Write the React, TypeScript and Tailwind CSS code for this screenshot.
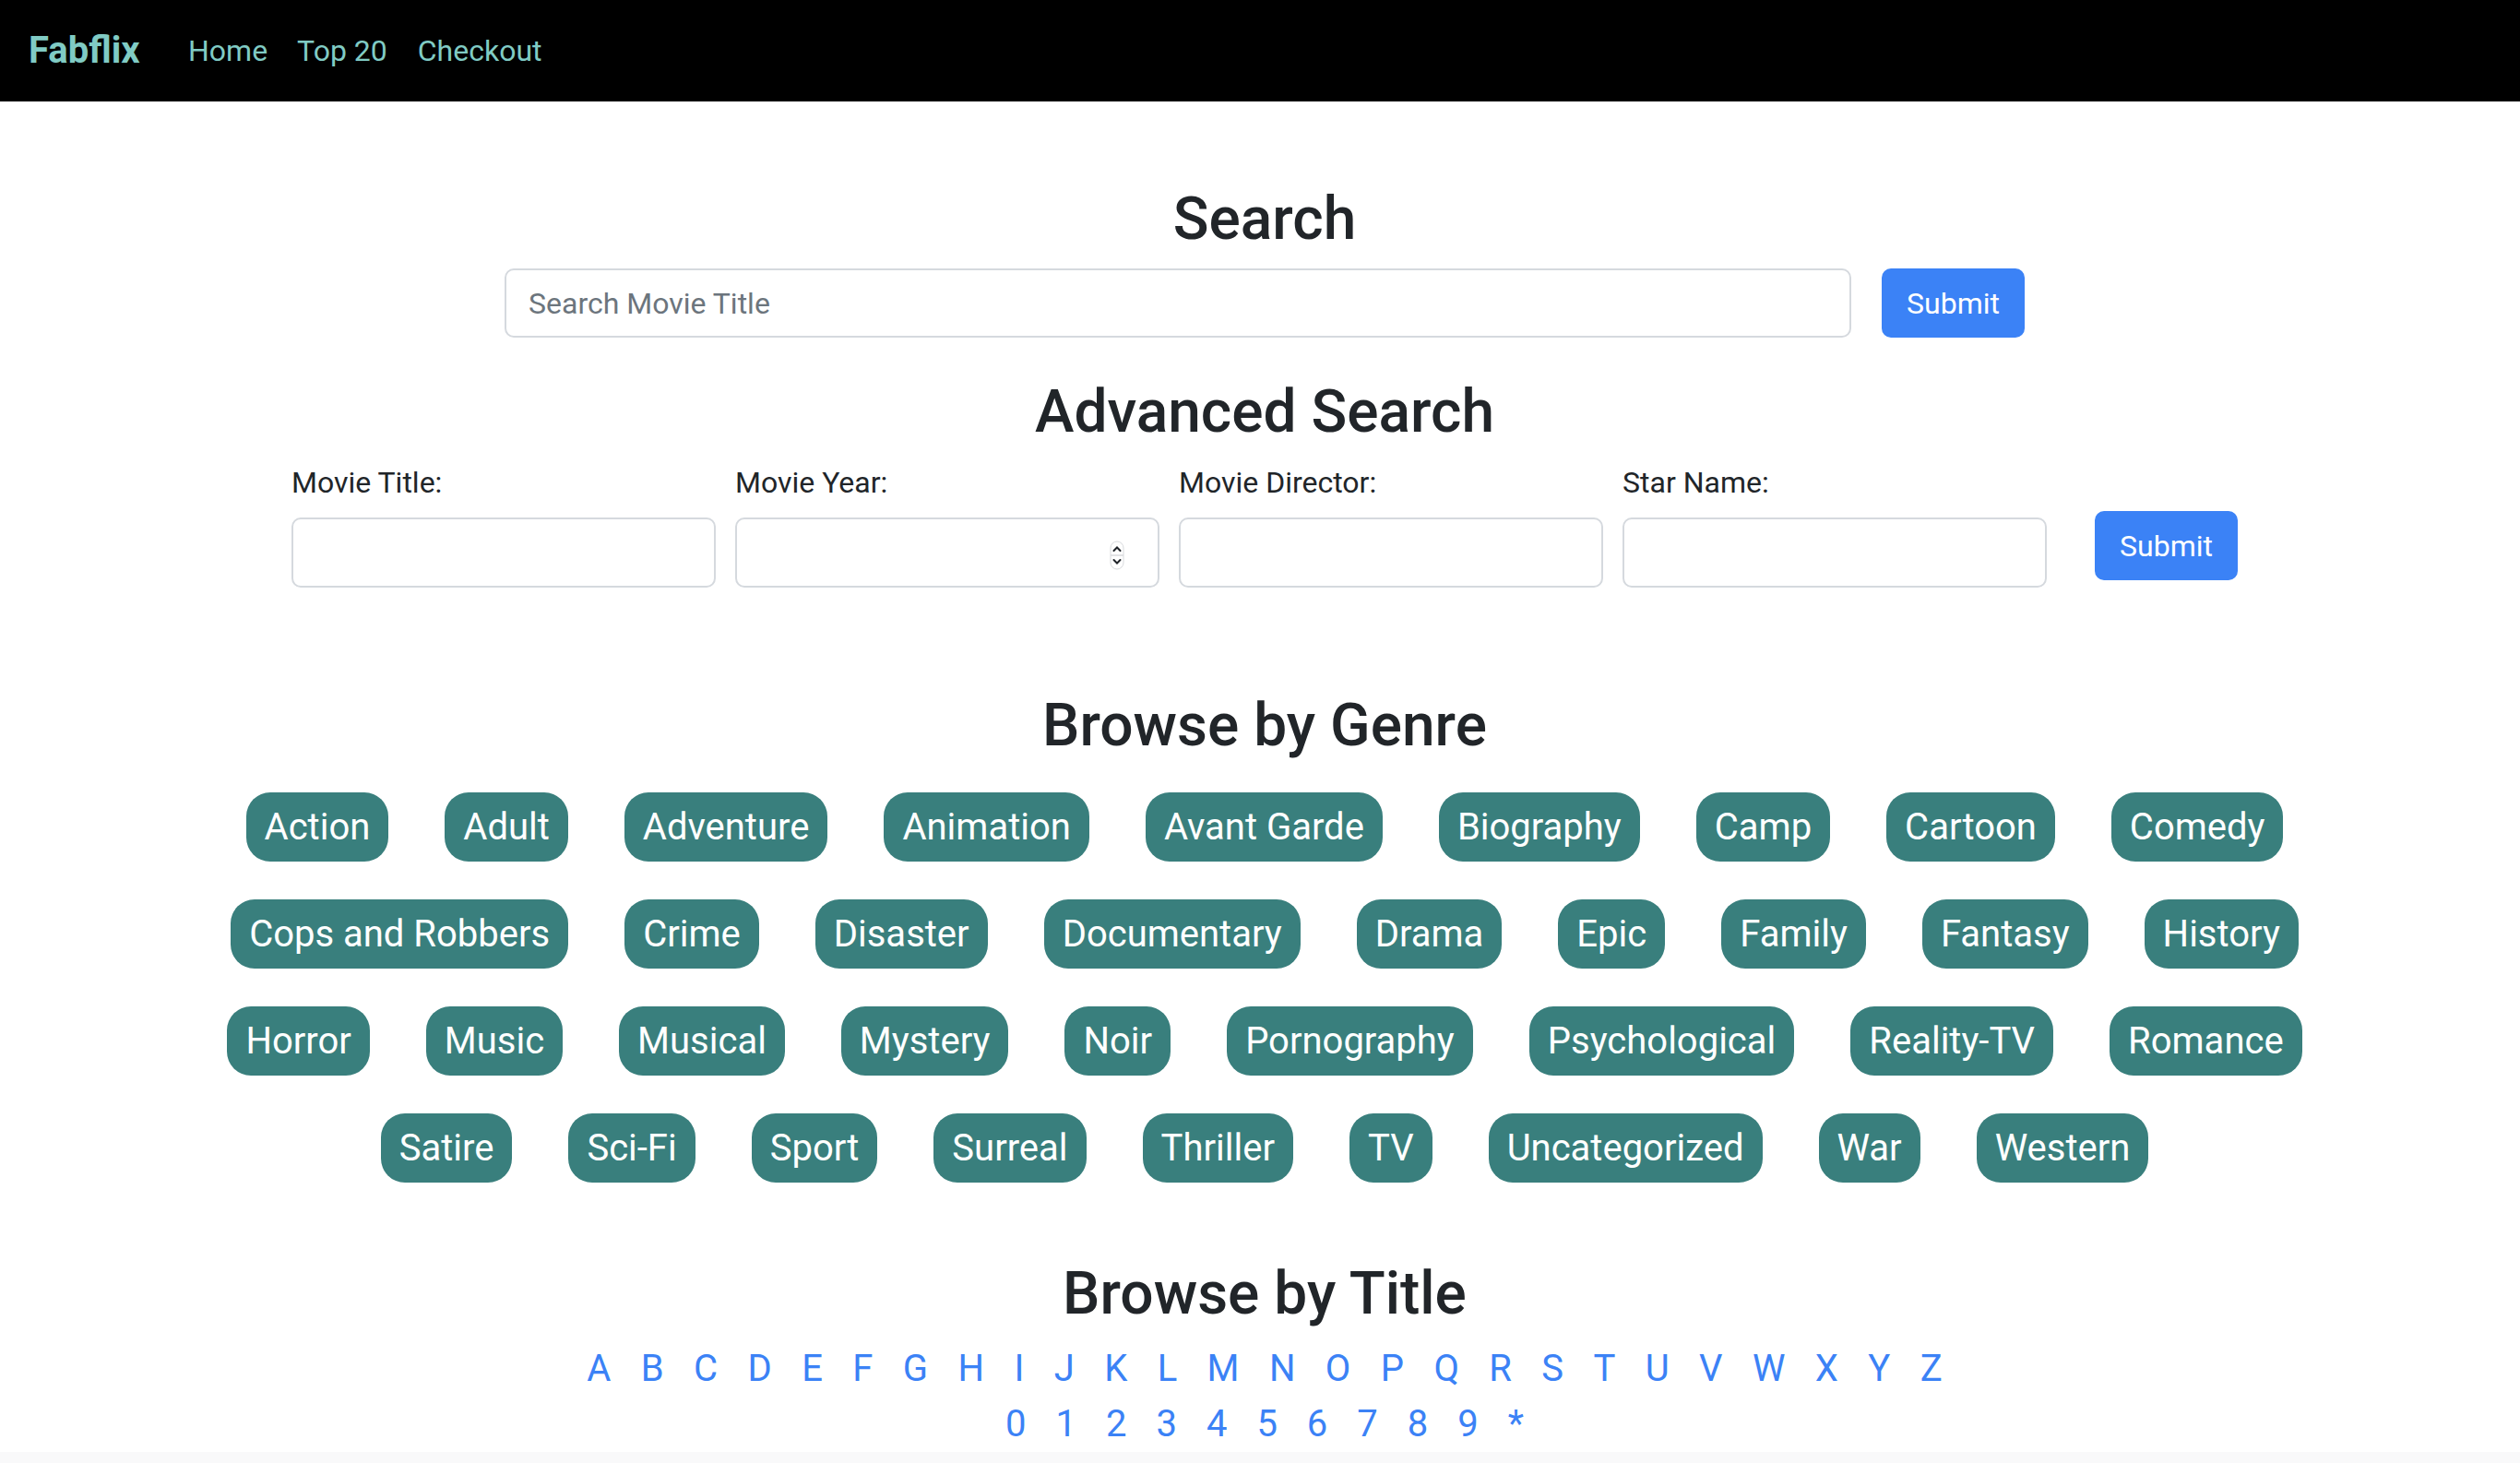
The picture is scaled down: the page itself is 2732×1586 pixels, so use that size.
import React from 'react';

const genreRows: string[][] = [
  ['Action', 'Adult', 'Adventure', 'Animation', 'Avant Garde', 'Biography', 'Camp', 'Cartoon', 'Comedy'],
  ['Cops and Robbers', 'Crime', 'Disaster', 'Documentary', 'Drama', 'Epic', 'Family', 'Fantasy', 'History'],
  ['Horror', 'Music', 'Musical', 'Mystery', 'Noir', 'Pornography', 'Psychological', 'Reality-TV', 'Romance'],
  ['Satire', 'Sci-Fi', 'Sport', 'Surreal', 'Thriller', 'TV', 'Uncategorized', 'War', 'Western'],
];

const letters = 'ABCDEFGHIJKLMNOPQRSTUVWXYZ'.split('');
const digits = ['0', '1', '2', '3', '4', '5', '6', '7', '8', '9', '*'];

const Heading: React.FC<{ className?: string; children: React.ReactNode }> = ({ className = '', children }) => (
  <h2 className={`text-[64px] font-medium leading-[77px] text-[#212529] ${className}`}>{children}</h2>
);

const SubmitButton: React.FC<{ className?: string }> = ({ className = '' }) => (
  <button className={`w-[155px] h-[75px] rounded-[10px] bg-[#3b82f6] text-white text-[32px] ${className}`}>
    Submit
  </button>
);

const Spinner = () => (
  <svg className="absolute right-[38px] top-[25px]" width="16" height="32" viewBox="0 0 16 32">
    <rect x="1" y="1" width="14" height="30" rx="7" fill="#fff" stroke="#d8dadd" strokeWidth="1" />
    <line x1="1" y1="16" x2="15" y2="16" stroke="#d8dadd" strokeWidth="1.5" />
    <path d="M4.5 11 L8 7.5 L11.5 11" fill="none" stroke="#1f2328" strokeWidth="2" strokeLinecap="round" />
    <path d="M4.5 21 L8 24.5 L11.5 21" fill="none" stroke="#1f2328" strokeWidth="2" strokeLinecap="round" />
  </svg>
);

const fields = [
  { label: 'Movie Title:', spinner: false },
  { label: 'Movie Year:', spinner: true },
  { label: 'Movie Director:', spinner: false },
  { label: 'Star Name:', spinner: false },
];

export default function App() {
  return (
    <div className="min-h-screen bg-white font-['Roboto','Liberation_Sans',sans-serif] text-[#212529]">
      {/* Navbar */}
      <nav className="h-[110px] bg-black flex items-center pl-[31px]">
        <span className="w-[157px] text-[40px] font-bold text-[#80cbc4]">Fabflix</span>
        <div className="flex text-[32px] text-[#80cbc4]">
          <a className="px-[16px]">Home</a>
          <a className="px-[16px]">Top 20</a>
          <a className="px-[17px]">Checkout</a>
        </div>
      </nav>

      <main className="pl-[10px] flex flex-col items-center">
        <Heading className="mt-[89px]">Search</Heading>
        <div className="mt-[15px] flex gap-[33px]">
          <input
            className="w-[1460px] h-[75px] rounded-[10px] border-2 border-[#d5d9de] px-[24px] text-[32px] placeholder:text-[#6c757d] outline-none"
            placeholder="Search Movie Title"
          />
          <SubmitButton />
        </div>

        <Heading className="mt-[42px]">Advanced Search</Heading>
        <div className="mt-[14px] flex items-end gap-[21px]">
          {fields.map((f) => (
            <div key={f.label} className="flex flex-col w-[460px]">
              <label className="text-[32px] leading-[48px] mb-[14px]">{f.label}</label>
              <div className="relative">
                <input className="w-[460px] h-[76px] rounded-[10px] border-2 border-[#d5d9de] px-[24px] text-[32px] outline-none" />
                {f.spinner && <Spinner />}
              </div>
            </div>
          ))}
          <SubmitButton className="ml-[31px] mb-[8px]" />
        </div>

        <Heading className="mt-[111px]">Browse by Genre</Heading>
        <div className="mt-[34px] flex flex-col gap-[41px]">
          {genreRows.map((row, i) => (
            <div key={i} className="flex justify-center gap-[61px]">
              {row.map((g) => (
                <a
                  key={g}
                  className="h-[75px] px-[20px] flex items-center rounded-[26px] bg-[#397f7d] text-white text-[40px] whitespace-nowrap"
                >
                  {g}
                </a>
              ))}
            </div>
          ))}
        </div>

        <Heading className="mt-[82px]">Browse by Title</Heading>
        <div className="mt-[13px] flex flex-col items-center text-[40px] leading-[60px] text-[#3b82f6]">
          <div className="flex gap-[32.4px]">
            {letters.map((l) => (
              <a key={l}>{l}</a>
            ))}
          </div>
          <div className="flex gap-[32px]">
            {digits.map((d) => (
              <a key={d}>{d}</a>
            ))}
          </div>
        </div>
      </main>
      <div className="h-[60px] bg-[#f9f9fa]" />
    </div>
  );
}
